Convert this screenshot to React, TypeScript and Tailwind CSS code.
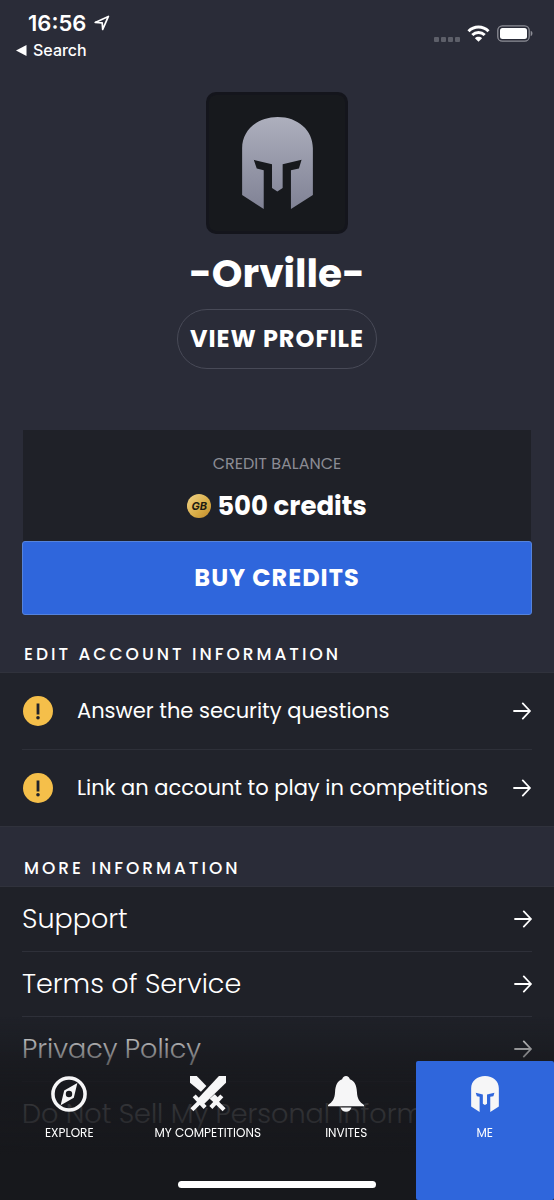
import { useState } from 'react';
import { clsx } from 'clsx';

interface IconProps {
  className?: string;
}

function HelmetShape({ fill }: { fill: string }) {
  return (
    <path
      fill={fill}
      d="M0 94C0 40 46 0 107 0s106 40 106 94v141l-66 42V160l24-5 8-26-57 13v72l-16 10-16-10v-72l-55-13 9 26 21 5v117L0 235z"
    />
  );
}

function AvatarHelmet({ className }: IconProps) {
  return (
    <svg className={className} viewBox="0 0 213 277" aria-hidden="true">
      <defs>
        <linearGradient id="steel" x1="0" y1="0" x2="0" y2="1">
          <stop offset="0" stopColor="#adafbd" />
          <stop offset="1" stopColor="#808295" />
        </linearGradient>
      </defs>
      <HelmetShape fill="url(#steel)" />
    </svg>
  );
}

function HelmetIcon({ className }: IconProps) {
  return (
    <svg className={className} viewBox="0 0 213 277" aria-hidden="true">
      <HelmetShape fill="currentColor" />
    </svg>
  );
}

function CompassIcon({ className }: IconProps) {
  return (
    <svg className={className} viewBox="0 0 112 112" fill="none" aria-hidden="true">
      <circle cx="56" cy="56" r="50" stroke="currentColor" strokeWidth="11" />
      <path
        fill="currentColor"
        fillRule="evenodd"
        d="M82 22 71 68 30 91 41 45zM56 46a10 10 0 1 0 0 20 10 10 0 1 0 0-20z"
      />
    </svg>
  );
}

function SwordsIcon({ className }: IconProps) {
  return (
    <svg className={className} viewBox="0 0 112 112" aria-hidden="true">
      <g fill="currentColor">
        <path d="M90 0h22v21L43 88 25 70z" />
        <path d="M0 0h21l30 31-17 18L0 21z" />
        <path d="m77 57 14 14-14 14-16-14z" />
      </g>
      <g stroke="currentColor" strokeWidth="13">
        <path d="m13 62 34 36M31 80 6 105M99 62 65 98M81 80l25 25" />
      </g>
    </svg>
  );
}

function BellIcon({ className }: IconProps) {
  return (
    <svg className={className} viewBox="0 0 112 112" fill="currentColor" aria-hidden="true">
      <path d="M56 0c6 0 11 4 12 10 15 5 21 20 22 39 1 22 8 32 22 41v4H0v-4c14-9 21-19 22-41 1-19 7-34 22-39C45 4 50 0 56 0z" />
      <path d="M39 98h34c-2 9-9 13-17 13s-15-4-17-13z" />
    </svg>
  );
}

function ArrowIcon({ className }: IconProps) {
  return (
    <svg
      className={className}
      viewBox="0 0 18 18"
      fill="none"
      stroke="currentColor"
      strokeWidth="1.8"
      strokeLinecap="round"
      strokeLinejoin="round"
      aria-hidden="true"
    >
      <path d="M1 9h16M9.8 1.4 17 9l-7.2 7.6" />
    </svg>
  );
}

function StatusBar() {
  return (
    <header className="flex h-[92px] items-start justify-between pt-2 pr-[21px] pl-4 font-['Inter',sans-serif]">
      <div>
        <div className="flex items-center gap-2 pl-3">
          <span className="text-[22px] leading-[30px] font-semibold">16:56</span>
          <svg className="h-4 w-4" viewBox="0 0 16 16" fill="none" aria-hidden="true">
            <path
              d="M1.2 7.4 14.4 1.4 8.7 14.4 8.2 7.8z"
              stroke="currentColor"
              strokeWidth="1.7"
              strokeLinejoin="round"
            />
          </svg>
        </div>
        <a href="#search" className="flex items-center gap-[6px] text-base leading-6 font-medium">
          <svg className="h-[11px] w-[11px]" viewBox="0 0 11 11" fill="currentColor" aria-hidden="true">
            <path d="M10.5 0v11L0 5.5z" />
          </svg>
          Search
        </a>
      </div>
      <div className="flex items-center gap-[7px] pt-[17px]">
        <div className="flex gap-[2px] pt-3">
          <span className="h-[5px] w-[5px] rounded-[1px] bg-[#5d5f69]" />
          <span className="h-[5px] w-[5px] rounded-[1px] bg-[#5d5f69]" />
          <span className="h-[5px] w-[5px] rounded-[1px] bg-[#5d5f69]" />
          <span className="h-[5px] w-[5px] rounded-[1px] bg-[#5d5f69]" />
        </div>
        <svg className="h-[17px] w-[23px]" viewBox="0 0 23 17" fill="none" aria-hidden="true">
          <g stroke="currentColor" strokeWidth="3">
            <path d="M1.5 6.2c5.7-5.6 14.3-5.6 20 0" />
            <path d="M5.3 10c3.6-3.5 8.8-3.5 12.4 0" />
          </g>
          <path d="M11.5 16.8 7.9 13.2c2-1.9 5.2-1.9 7.2 0z" fill="currentColor" />
        </svg>
        <svg className="h-[17px] w-9" viewBox="0 0 36 17" fill="none" aria-hidden="true">
          <rect x=".8" y=".8" width="31.4" height="15.4" rx="4.5" stroke="#8d8e96" strokeWidth="1.3" />
          <rect x="3" y="3" width="27" height="11" rx="2.5" fill="currentColor" />
          <path d="M33.7 5.8c2.3.7 2.3 4.7 0 5.4z" fill="#8d8e96" />
        </svg>
      </div>
    </header>
  );
}

function SectionTitle({ children }: { children: string }) {
  return (
    <h2 className="px-6 text-[17px] leading-6 font-medium tracking-[3px]">{children}</h2>
  );
}

const accountTasks = [
  'Answer the security questions',
  'Link an account to play in competitions',
];

const infoLinks = [
  'Support',
  'Terms of Service',
  'Privacy Policy',
  'Do Not Sell My Personal Information',
];

const tabs = [
  { label: 'EXPLORE', Icon: CompassIcon, size: 'w-9' },
  { label: 'MY COMPETITIONS', Icon: SwordsIcon, size: 'w-9' },
  { label: 'INVITES', Icon: BellIcon, size: 'w-9' },
  { label: 'ME', Icon: HelmetIcon, size: 'w-7' },
];

function TabBar() {
  const [active, setActive] = useState('ME');

  return (
    <nav className="fixed inset-x-0 bottom-0 bg-[linear-gradient(to_bottom,#17181c00_0%,#17181c4d_12%,#17181ca6_24%,#17181cdb_38%,#17181ce6_55%,#17181c_75%)] pt-11">
      <div className="grid grid-cols-4">
        {tabs.map(({ label, Icon, size }) => (
          <button
            key={label}
            onClick={() => setActive(label)}
            aria-current={active === label ? 'page' : undefined}
            className={clsx(
              'flex h-[139px] flex-col items-center gap-3 rounded-[2px] pt-[15px] whitespace-nowrap',
              active === label && 'bg-[#2f66dc]'
            )}
          >
            <Icon className={clsx('h-9 text-[#f6f6f7]', size)} />
            <span className="text-[12px] leading-[18px]">{label}</span>
          </button>
        ))}
      </div>
      {/* Home indicator */}
      <div className="absolute inset-x-0 bottom-3 mx-auto h-[7px] w-[198px] rounded-full bg-white" />
    </nav>
  );
}

export default function App() {
  return (
    <div className="min-h-screen overflow-x-hidden bg-[#2a2c38] font-['Poppins','Inter',sans-serif] text-white">
      <StatusBar />

      <main>
        {/* Profile */}
        <section className="flex flex-col items-center">
          <div className="flex h-[142px] w-[142px] items-center justify-center rounded-[10px] border-[3px] border-[#14151c] bg-[#17191d]">
            <AvatarHelmet className="h-[92px] w-[71px]" />
          </div>
          <h1 className="mt-4 text-[39px] leading-[48px] font-bold">-Orville-</h1>
          <button className="mt-[11px] h-[60px] rounded-full border border-[#484a57] px-3 text-2xl font-bold tracking-[1px]">
            VIEW PROFILE
          </button>
        </section>

        {/* Credits */}
        <section className="mt-[61px] px-[22px]">
          <div className="mx-px flex h-[111px] flex-col items-center bg-[#1f2128] pt-[22px]">
            <p className="text-base leading-6 text-[#8b8c94]">CREDIT BALANCE</p>
            <div className="mt-[14px] flex items-center gap-[6px]">
              <span className="flex h-6 w-6 items-center justify-center rounded-full bg-[linear-gradient(135deg,#f0d48a,#d9ac45_60%,#c08a2c)] font-['Inter',sans-serif] text-[11px] leading-none font-bold text-[#1d1a12] italic">
                GB
              </span>
              <span className="text-[26px] leading-8 font-bold">500 credits</span>
            </div>
          </div>
          <button className="h-[74px] w-full rounded-[3px] border border-[#5583dc] bg-[#2f66dc] text-2xl font-bold tracking-[1px]">
            BUY CREDITS
          </button>
        </section>

        {/* Account */}
        <section className="pt-[27px]">
          <SectionTitle>EDIT ACCOUNT INFORMATION</SectionTitle>
          <ul className="mt-[6px] border-y border-[#30323c] bg-[#21232b] px-[22px]">
            {accountTasks.map((task) => (
              <li key={task} className="border-b border-[#2e3039] last:border-b-0">
                <a href="#account" className="flex h-[76px] items-center px-px">
                  <svg className="h-[30px] w-[30px] shrink-0" viewBox="0 0 30 30" aria-hidden="true">
                    <circle cx="15" cy="15" r="15" fill="#f5bf4a" />
                    <path d="M13.6 7.5h2.8v11h-2.8z" fill="#21232b" />
                    <circle cx="15" cy="21.7" r="1.8" fill="#21232b" />
                  </svg>
                  <span className="ml-6 flex-1 text-[21px] leading-8 whitespace-nowrap">{task}</span>
                  <ArrowIcon className="h-[18px] w-[18px] shrink-0" />
                </a>
              </li>
            ))}
          </ul>
        </section>

        {/* More */}
        <section className="pt-[29px]">
          <SectionTitle>MORE INFORMATION</SectionTitle>
          <ul className="mt-[6px] border-t border-[#30323c] bg-[#1f2128] px-[22px] pb-16">
            {infoLinks.map((link) => (
              <li key={link} className="border-b border-[#2e3039]">
                <a href="#info" className="flex h-16 items-center gap-4">
                  <span className="min-w-0 flex-1 overflow-hidden text-[27px] leading-10 font-light whitespace-nowrap">
                    {link}
                  </span>
                  <ArrowIcon className="h-[18px] w-[18px] shrink-0" />
                </a>
              </li>
            ))}
          </ul>
        </section>
      </main>

      <TabBar />
    </div>
  );
}
